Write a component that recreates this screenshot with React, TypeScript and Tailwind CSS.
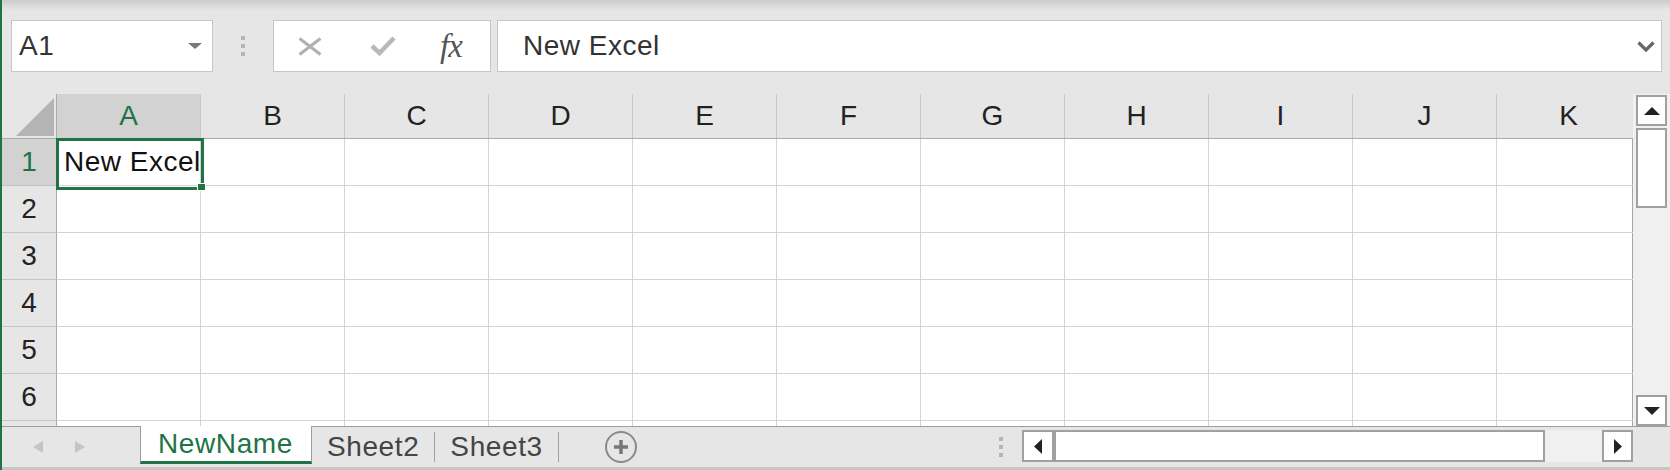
import React from 'react';

const COLS = ['A', 'B', 'C', 'D', 'E', 'F', 'G', 'H', 'I', 'J', 'K'];
const ROWS = [1, 2, 3, 4, 5, 6, 7];
const SHEETS = ['Sheet2', 'Sheet3'];

function Grip() {
  return (
    <div className="flex flex-col gap-[4px]">
      <div className="w-[4px] h-[4px] bg-[#b4b4b4]" />
      <div className="w-[4px] h-[4px] bg-[#b4b4b4]" />
      <div className="w-[4px] h-[4px] bg-[#b4b4b4]" />
    </div>
  );
}

function Arrow({ dir, color = '#222', w = 14, h = 8 }: { dir: 'up' | 'down' | 'left' | 'right'; color?: string; w?: number; h?: number }) {
  const pts = {
    up: `0,${h} ${w / 2},0 ${w},${h}`,
    down: `0,0 ${w},0 ${w / 2},${h}`,
    left: `${w},0 ${w},${h} 0,${h / 2}`,
    right: `0,0 ${w},${h / 2} 0,${h}`,
  }[dir];
  return (
    <svg width={w} height={h} viewBox={`0 0 ${w} ${h}`}>
      <polygon points={pts} fill={color} />
    </svg>
  );
}

function FormulaBar() {
  return (
    <div className="h-[94px] shrink-0 flex flex-col">
      <div className="h-[10px] bg-linear-to-b from-[#cbcbcb] to-[#e6e6e6]" />
      <div className="h-[52px] mt-[10px] flex pl-[9px] pr-[8px]">
        {/* name box */}
        <div className="w-[202px] bg-white border border-[#c6c6c6] flex items-center pl-[7px] pr-[10px]">
          <span className="text-[28px] text-[#333] leading-none tracking-[0.5px] flex-1">A1</span>
          <Arrow dir="down" color="#777" w={14} h={6} />
        </div>
        <div className="w-[60px] flex items-center justify-center">
          <Grip />
        </div>
        {/* cancel / enter / insert function */}
        <div className="w-[218px] bg-white border border-[#c6c6c6] flex items-center">
          <svg className="ml-[24px]" width="24" height="19" viewBox="0 0 24 19">
            <path d="M1.5 1.5 L22.5 17.5 M22.5 1.5 L1.5 17.5" stroke="#b0b0b0" strokeWidth="3" />
          </svg>
          <svg className="ml-[48px]" width="26" height="20" viewBox="0 0 26 20">
            <path d="M2 10 L9.5 17 L24 2" stroke="#b8b8b8" strokeWidth="4.5" fill="none" />
          </svg>
          <span className="ml-[44px] text-[33px] italic text-[#555] font-['Liberation_Serif',serif] leading-none tracking-[-1px]">fx</span>
        </div>
        {/* formula input */}
        <div className="flex-1 ml-[6px] bg-white border border-[#c6c6c6] flex items-center pl-[25px] pr-[6px]">
          <span className="flex-1 text-[28px] text-[#333] leading-none tracking-[0.5px]">New Excel</span>
          <svg width="18" height="11" viewBox="0 0 18 11">
            <path d="M1.5 1.5 L9 9 L16.5 1.5" stroke="#666" strokeWidth="3.2" fill="none" />
          </svg>
        </div>
      </div>
    </div>
  );
}

function Grid() {
  return (
    <div className="h-[332px] shrink-0 flex">
      <div className="flex-1 relative overflow-hidden bg-white">
        {/* column headers */}
        <div className="h-[45px] flex bg-[#e6e6e6] border-b border-[#ababab]">
          <div className="w-[55px] shrink-0 border-r border-[#ababab] flex items-end justify-end pr-[2px] pb-[2px]">
            <svg width="38" height="38" viewBox="0 0 38 38">
              <polygon points="0,38 38,0 38,38" fill="#b4b4b4" />
            </svg>
          </div>
          {COLS.map(c => (
            <div
              key={c}
              className={`w-[144px] shrink-0 border-r border-[#c8c8c8] flex items-center justify-center text-[28px] ${c === 'A' ? 'bg-[#d2d2d2] text-[#217346]' : 'text-[#222]'}`}
            >
              {c}
            </div>
          ))}
        </div>
        {/* rows; the last one only peeks out above the sheet tabs */}
        <div className="border-r border-[#a6a6a6]">
          {ROWS.map(r => (
            <div key={r} className="h-[47px] flex">
              <div
                className={`w-[55px] shrink-0 border-r border-b border-r-[#ababab] border-b-[#c4c4c4] flex items-center justify-center text-[28px] ${r === 1 ? 'bg-[#d2d2d2] text-[#217346]' : 'bg-[#e6e6e6] text-[#222]'}`}
              >
                {r < 7 ? r : ''}
              </div>
              {COLS.map(c => (
                <div key={c} className="w-[144px] shrink-0 border-r border-b border-[#d4d4d4] flex items-center pl-[7px] text-[28px] text-[#111] tracking-[0.5px] whitespace-nowrap">
                  {r === 1 && c === 'A' ? 'New Excel' : ''}
                </div>
              ))}
            </div>
          ))}
        </div>
        {/* active cell */}
        <div className="absolute left-[54px] top-[44px] w-[148px] h-[52px] border-[3px] border-[#217346]" />
        <div className="absolute left-[195px] top-[89px] w-[9px] h-[8px] bg-[#217346] border border-white" />
      </div>
      {/* vertical scrollbar */}
      <div className="w-[37px] shrink-0 bg-[#f0f0f0] flex flex-col items-center pt-[1px]">
        <div className="w-[31px] h-[31px] bg-white border-2 border-[#a0a0a0] flex items-center justify-center">
          <Arrow dir="up" w={16} h={8} />
        </div>
        <div className="w-[31px] h-[80px] mt-[2px] bg-white border-2 border-[#a0a0a0]" />
        <div className="flex-1" />
        <div className="w-[31px] h-[31px] bg-white border-2 border-[#a0a0a0] flex items-center justify-center">
          <Arrow dir="down" w={16} h={8} />
        </div>
      </div>
    </div>
  );
}

function SheetTabs() {
  return (
    <div className="h-[41px] shrink-0 flex border-t border-[#9e9e9e]">
      <div className="w-[138px] flex items-center">
        <div className="ml-[31px]">
          <Arrow dir="left" color="#c4c4c4" w={10} h={12} />
        </div>
        <div className="ml-[32px]">
          <Arrow dir="right" color="#c4c4c4" w={10} h={12} />
        </div>
      </div>
      {/* active sheet */}
      <div className="w-[172px] h-[38px] -mt-px bg-white border-x border-[#9e9e9e] border-b-[3px] border-b-[#217346] flex items-center pl-[17px] text-[28px] text-[#217346] leading-none tracking-[0.6px]">
        NewName
      </div>
      {SHEETS.map(s => (
        <div key={s} className="flex items-center">
          <span className="px-[15px] text-[28px] text-[#444] leading-none tracking-[0.6px]">{s}</span>
          <div className="w-px h-[30px] bg-[#a0a0a0]" />
        </div>
      ))}
      <div className="ml-[46px] flex items-center">
        <div className="w-[32px] h-[32px] rounded-full border-2 border-[#8a8a8a] flex items-center justify-center">
          <svg width="16" height="16" viewBox="0 0 16 16">
            <path d="M8 1 V15 M1 8 H15" stroke="#777" strokeWidth="3.5" />
          </svg>
        </div>
      </div>
      <div className="flex-1" />
      <div className="flex items-center mr-[19px]">
        <Grip />
      </div>
      {/* horizontal scrollbar */}
      <div className="w-[611px] flex items-start pt-[3px]">
        <div className="w-[32px] h-[32px] bg-white border-2 border-[#a0a0a0] flex items-center justify-center">
          <Arrow dir="left" w={8} h={15} />
        </div>
        <div className="w-[491px] h-[32px] bg-white border-2 border-[#a0a0a0]" />
        <div className="flex-1 h-[32px] bg-[#f0f0f0]" />
        <div className="w-[31px] h-[32px] bg-white border-2 border-[#a0a0a0] flex items-center justify-center">
          <Arrow dir="right" w={8} h={15} />
        </div>
      </div>
      <div className="w-[37px]" />
    </div>
  );
}

export default function App() {
  return (
    <div className="w-[1670px] h-[470px] flex flex-col bg-[#e6e6e6] border-l-2 border-[#217346] overflow-hidden font-['Liberation_Sans',Arial,sans-serif]">
      <FormulaBar />
      <Grid />
      <SheetTabs />
      <div className="h-[3px] bg-[#c6c6c6]" />
    </div>
  );
}
